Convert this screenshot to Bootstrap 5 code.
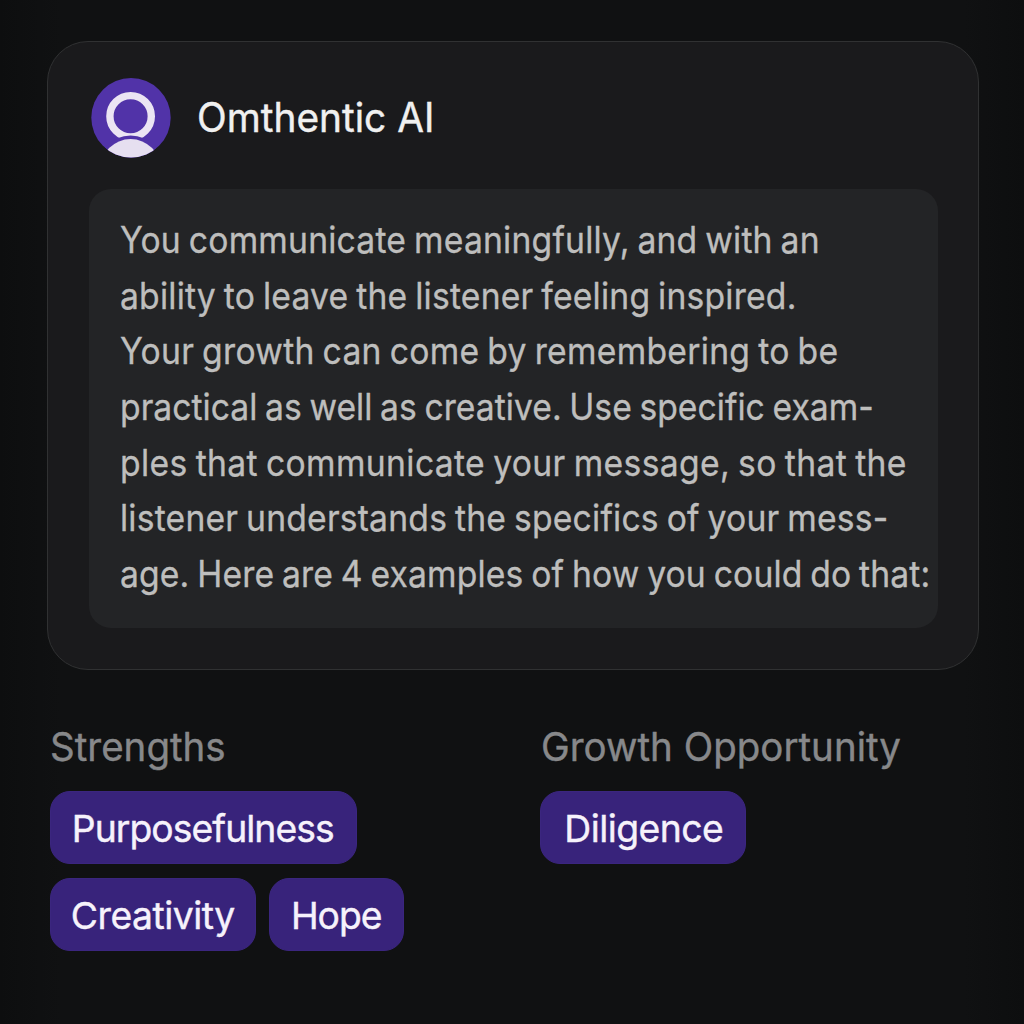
<!DOCTYPE html>
<html lang="en" data-bs-theme="dark">
<head>
<meta charset="utf-8">
<meta name="viewport" content="width=device-width, initial-scale=1">
<title>Omthentic AI</title>
<link href="https://cdn.jsdelivr.net/npm/bootstrap@5.3.0/dist/css/bootstrap.min.css" rel="stylesheet">
<style>
  body {
    height: 1024px;
    padding: 41px 45px 0 46.5px;
    font-family: Inter, Roboto, "Liberation Sans", sans-serif;
    background: linear-gradient(90deg, #0d0e0f 0, #101112 60px, #101112 964px, #0d0e0f 100%);
    overflow: hidden;
  }
  .chat-card {
    height: 629px;
    padding: 35.5px 40px 0 41px;
    border: 1.5px solid #303132;
    border-radius: 41px;
    background: #1a1a1c;
  }
  .avatar { width: 80px; height: 80px; margin-left: 2px; }
  .brand {
    margin: 0 0 0 26.5px;
    font-size: 40.5px;
    line-height: 50px;
    color: #f0f0f0;
    -webkit-text-stroke: .4px;
    transform: scaleX(.959);
    transform-origin: left;
  }
  .bubble {
    height: 439px;
    margin-top: 31px;
    padding: 23.4px 0 0 31.7px;
    border-radius: 22px;
    background: #232426;
  }
  .message {
    font-size: 37px;
    line-height: 55.7px;
    letter-spacing: .22px;
    word-spacing: -2px;
    color: #bebebd;
    -webkit-text-stroke: .35px;
    transform: scaleX(.91);
    transform-origin: left;
  }
  .tight { letter-spacing: .02px; }
  .close { letter-spacing: .15px; }
  .snug { letter-spacing: .15px; }
  .airy { letter-spacing: .31px; }
  .loose { letter-spacing: .4px; }
  .traits { padding: 52px 0 0 3px; }
  .trait-col { width: 490.5px; }
  .trait-title {
    margin: 0 0 18px .5px;
    font-size: 39.5px;
    line-height: 51px;
    font-weight: 400;
    color: #87888a;
    -webkit-text-stroke: .4px;
    transform: scaleX(.975);
    transform-origin: left;
  }
  .chip {
    height: 73px;
    padding-top: 3px;
    border: 1.5px solid #3b267f;
    border-radius: 20px;
    background: #38237b;
    color: #f6f2fb;
    font-size: 37.3px;
    line-height: 1;
    -webkit-text-stroke: .4px;
  }
  .chips { column-gap: 13px; row-gap: 14px; }
  .chip-purpose { width: 307.5px; padding-right: 1px; letter-spacing: -.95px; }
  .chip-creative { width: 206.5px; letter-spacing: -.5px; }
  .chip-hope { width: 134.5px; letter-spacing: -1px; }
  .chip-diligence { width: 205.5px; padding-left: 2px; letter-spacing: -.55px; }
</style>
</head>
<body>
<main>
  <section class="chat-card">
    <header class="d-flex align-items-center">
      <svg class="avatar flex-shrink-0" viewBox="0 0 80 80" aria-hidden="true">
        <defs><clipPath id="disc"><circle cx="40" cy="39.7" r="39.7"/></clipPath></defs>
        <g clip-path="url(#disc)">
          <rect width="80" height="80" fill="#5133a8"/>
          <circle cx="39.6" cy="38.3" r="20.7" fill="none" stroke="#ebe4f3" stroke-width="7.4"/>
          <circle cx="39.6" cy="92" r="34.4" fill="#5133a8"/>
          <circle cx="39.6" cy="91.5" r="30.4" fill="#e6dff0"/>
        </g>
      </svg>
      <h1 class="brand fw-normal text-nowrap">Omthentic AI</h1>
    </header>
    <div class="bubble">
      <p class="message mb-0 text-nowrap">
        You communicate meaningfully, and with an<br>
        ability to leave the listener feeling inspired.<br>
        <span class="airy">Your growth can come by remembering to be</span><br>
        <span class="tight">practical as well as creative. Use specific exam-</span><br>
        <span class="loose">ples that communicate your message, so that the</span><br>
        listener understands the specifics of your mess-<br>
        <span class="snug">age. Here are 4 examples of how you could do that:</span>
      </p>
    </div>
  </section>
  <section class="traits d-flex">
    <div class="trait-col flex-shrink-0">
      <h2 class="trait-title text-nowrap">Strengths</h2>
      <div class="chips d-flex flex-wrap">
        <span class="chip chip-purpose d-flex align-items-center justify-content-center me-5">Purposefulness</span>
        <span class="chip chip-creative d-flex align-items-center justify-content-center">Creativity</span>
        <span class="chip chip-hope d-flex align-items-center justify-content-center">Hope</span>
      </div>
    </div>
    <div>
      <h2 class="trait-title text-nowrap">Growth Opportunity</h2>
      <div class="chips d-flex flex-wrap">
        <span class="chip chip-diligence d-flex align-items-center justify-content-center">Diligence</span>
      </div>
    </div>
  </section>
</main>
<script src="https://cdn.jsdelivr.net/npm/bootstrap@5.3.0/dist/js/bootstrap.bundle.min.js"></script>
</body>
</html>
